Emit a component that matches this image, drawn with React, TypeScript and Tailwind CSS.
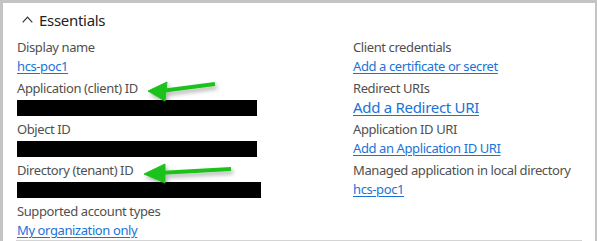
import React from "react";

const FONT = { fontFamily: '"Segoe UI", "Noto Sans", "Open Sans", sans-serif' };

function Field({ label, value, link, bar, big }: { label: string; value?: string; link?: boolean; bar?: number; big?: boolean }) {
  return (
    <div className="flex flex-col">
      <div className="h-[19px] whitespace-nowrap text-[13px] leading-[19px] tracking-[-0.4px] text-[#505050]">{label}</div>
      <div className="h-[19px] text-[13px] leading-[19px]">
        {bar ? (
          <div className="mt-[2px] h-[16px] bg-black" style={{ width: bar }} />
        ) : (
          <a
            className={
              "whitespace-nowrap text-[#1a73d6] underline decoration-1 underline-offset-2 " +
              (big ? "text-[15px] leading-[19px] tracking-[-0.3px]" : "text-[13px] leading-[19px] tracking-[-0.4px]")
            }
          >
            {value}
          </a>
        )}
      </div>
    </div>
  );
}

function Arrows() {
  return (
    <svg className="pointer-events-none absolute left-0 top-0" width="597" height="241">
      <defs>
        <filter id="sh" x="-20%" y="-50%" width="150%" height="250%">
          <feDropShadow dx="2" dy="3" stdDeviation="2" floodColor="#000" floodOpacity="0.3" />
        </filter>
      </defs>
      <g filter="url(#sh)" fill="#1ec21e" stroke="#1ec21e">
        <line x1="158" y1="88" x2="212" y2="81" strokeWidth="4" />
        <polygon points="145,88 164,79 162,98" strokeWidth="1" />
        <line x1="156" y1="170" x2="228" y2="166" strokeWidth="4" />
        <polygon points="141,171 162,161 162,180" strokeWidth="1" />
      </g>
    </svg>
  );
}

export default function App() {
  return (
    <div className="h-[241px] w-[597px] overflow-hidden bg-white" style={FONT}>
      <div className="relative flex h-full flex-col border-l-[3px] border-r-[2px] border-t-[3px] border-[#c4c4c4]">
        <div className="flex h-[36px] items-center pl-[19px]">
          <svg width="11" height="7" viewBox="0 0 11 7" className="mb-[2px]">
            <path d="M0.7 6.3 L5.5 1.2 L10.3 6.3" fill="none" stroke="#333" strokeWidth="1.2" />
          </svg>
          <span className="ml-[6px] text-[15px] leading-[19px] tracking-[-0.3px] text-[#222]">Essentials</span>
        </div>
        <div className="grid grid-cols-[336px_1fr] pl-[14px]">
          <div className="flex flex-col gap-[3px]">
            <Field label="Display name" value="hcs-poc1" />
            <Field label="Application (client) ID" bar={240} />
            <Field label="Object ID" bar={240} />
            <Field label="Directory (tenant) ID" bar={244} />
            <Field label="Supported account types" value="My organization only" />
          </div>
          <div className="flex flex-col gap-[3px]">
            <Field label="Client credentials" value="Add a certificate or secret" />
            <Field label="Redirect URIs" value="Add a Redirect URI" big />
            <Field label="Application ID URI" value="Add an Application ID URI" />
            <Field label="Managed application in local directory" value="hcs-poc1" />
          </div>
        </div>
        <div className="mx-[13px] mt-auto h-px bg-[#d4d4d4]" />
        <Arrows />
      </div>
    </div>
  );
}
